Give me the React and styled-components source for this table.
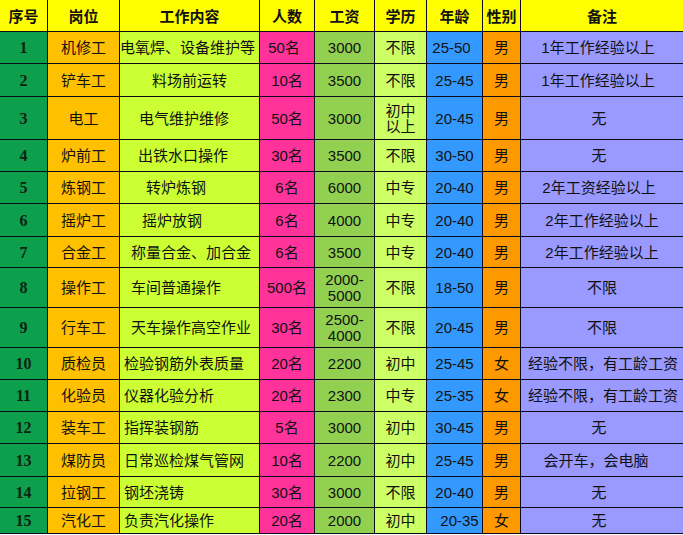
import React from "react";
import styled, { createGlobalStyle } from "styled-components";

const Global = createGlobalStyle`
  html, body { margin: 0; padding: 0; background: #fff; }
  body { font-family: "Liberation Sans", "Noto Sans CJK SC", sans-serif; }
`;

const COLS = "48px 72px 140px 55px 60px 52px 56px 38px 162px";
const BG = ["#0e9f4c", "#ffc000", "#ccff33", "#ff3399", "#92d050", "#ccff66", "#3399ff", "#ff9900", "#9999ff"];

const Table = styled.div`
  width: 683px;
  display: flex;
  flex-direction: column;
  color: #111;
`;

const Row = styled.div`
  display: grid;
  grid-template-columns: ${COLS};
  height: ${(p) => p.$h}px;
`;

const Cell = styled.div`
  box-sizing: border-box;
  background: ${(p) => p.$bg};
  border-bottom: 1px solid #0a0a1a;
  border-right: ${(p) => (p.$last ? "none" : "1px solid #0a0a1a")};
  display: flex;
  align-items: center;
  justify-content: ${(p) => (p.$pad != null ? "flex-start" : "center")};
  padding-left: ${(p) => (p.$pad != null ? p.$pad : 0)}px;
  padding-top: 1px;
  font-size: 15px;
  line-height: 16px;
  white-space: nowrap;
  text-align: center;
  overflow: visible;
`;

const HeadCell = styled(Cell)`
  background: #ffff00;
  font-weight: bold;
  font-family: "Noto Sans CJK SC", sans-serif;
  font-size: 15px;
`;

const NumCell = styled(Cell)`
  font-family: "Liberation Serif", serif;
  font-weight: bold;
  font-size: 16px;
  color: #0b2412;
`;

const Shift = styled.span`
  position: relative;
  left: ${(p) => p.$x || 0}px;
`;

const HEAD = ["序号", "岗位", "工作内容", "人数", "工资", "学历", "年龄", "性别", "备注"];

const rows = [
  { h: 32, post: "机修工", c: "电氧焊、设备维护等", cp: 0, n: "50名", nx: -3, pay: "3000", edu: "不限", age: "25-50", ax: -3, sex: "男", note: "1年工作经验以上", ox: -4 },
  { h: 33, post: "铲车工", c: "料场前运转", cp: null, n: "10名", pay: "3500", edu: "不限", age: "25-45", sex: "男", note: "1年工作经验以上", ox: -4 },
  { h: 43, post: "电工", c: "电气维护维修", cp: 19, n: "50名", pay: "3000", edu: ["初中", "以上"], age: "20-45", sex: "男", note: "无", ox: -3 },
  { h: 32, post: "炉前工", c: "出铁水口操作", cp: 18, n: "30名", pay: "3500", edu: "不限", age: "30-50", sex: "男", note: "无", ox: -3 },
  { h: 32, post: "炼钢工", c: "转炉炼钢", cp: 26, n: "6名", pay: "6000", edu: "中专", age: "20-40", sex: "男", note: "2年工资经验以上", ox: -3 },
  { h: 33, post: "摇炉工", c: "摇炉放钢", cp: 22, n: "6名", pay: "4000", edu: "中专", age: "20-40", sex: "男", note: "2年工作经验以上", ox: 0 },
  { h: 31, post: "合金工", c: "称量合金、加合金", cp: 11, n: "6名", pay: "3500", edu: "中专", age: "20-40", sex: "男", note: "2年工作经验以上", ox: 0 },
  { h: 40, post: "操作工", c: "车间普通操作", cp: 11, n: "500名", pay: ["2000-", "5000"], edu: "不限", age: "18-50", sex: "男", note: "不限" },
  { h: 40, post: "行车工", c: "天车操作高空作业", cp: 11, n: "30名", pay: ["2500-", "4000"], edu: "不限", age: "20-45", sex: "男", note: "不限" },
  { h: 32, post: "质检员", c: "检验钢筋外表质量", cp: 4, n: "20名", pay: "2200", edu: "初中", age: "25-45", sex: "女", note: "经验不限，有工龄工资", ox: 1 },
  { h: 32, post: "化验员", c: "仪器化验分析", cp: 4, n: "20名", pay: "2300", edu: "中专", age: "25-35", sex: "女", note: "经验不限，有工龄工资", ox: 1 },
  { h: 32, post: "装车工", c: "指挥装钢筋", cp: 4, n: "5名", pay: "3000", edu: "初中", age: "30-45", sex: "男", note: "无", ox: -3 },
  { h: 33, post: "煤防员", c: "日常巡检煤气管网", cp: 4, n: "10名", pay: "2200", edu: "初中", age: "25-45", sex: "男", note: "会开车，会电脑", ox: -6 },
  { h: 31, post: "拉钢工", c: "钢坯浇铸", cp: 4, n: "30名", pay: "3000", edu: "不限", age: "20-40", sex: "男", note: "无", ox: -3 },
  { h: 26, post: "汽化工", c: "负责汽化操作", cp: 4, n: "20名", pay: "2000", edu: "初中", age: "20-35", ax: 5, sex: "女", note: "无", ox: -3 },
];

const Lines = ({ v }) =>
  Array.isArray(v) ? (
    <span>
      {v[0]}
      <br />
      {v[1]}
    </span>
  ) : (
    v
  );

export default function App() {
  return (
    <>
      <Global />
      <Table>
        <Row $h={32}>
          {HEAD.map((t, i) => (
            <HeadCell key={t} $last={i === 8}>
              {t}
            </HeadCell>
          ))}
        </Row>
        {rows.map((r, i) => (
          <Row key={i} $h={r.h}>
            <NumCell $bg={BG[0]}>{i + 1}</NumCell>
            <Cell $bg={BG[1]}>{r.post}</Cell>
            <Cell $bg={BG[2]} $pad={r.cp}>
              {r.c}
            </Cell>
            <Cell $bg={BG[3]}>
              <Shift $x={r.nx}>{r.n}</Shift>
            </Cell>
            <Cell $bg={BG[4]}>
              <Lines v={r.pay} />
            </Cell>
            <Cell $bg={BG[5]}>
              <Lines v={r.edu} />
            </Cell>
            <Cell $bg={BG[6]}>
              <Shift $x={r.ax}>{r.age}</Shift>
            </Cell>
            <Cell $bg={BG[7]}>{r.sex}</Cell>
            <Cell $bg={BG[8]} $last>
              <Shift $x={r.ox}>{r.note}</Shift>
            </Cell>
          </Row>
        ))}
      </Table>
    </>
  );
}
